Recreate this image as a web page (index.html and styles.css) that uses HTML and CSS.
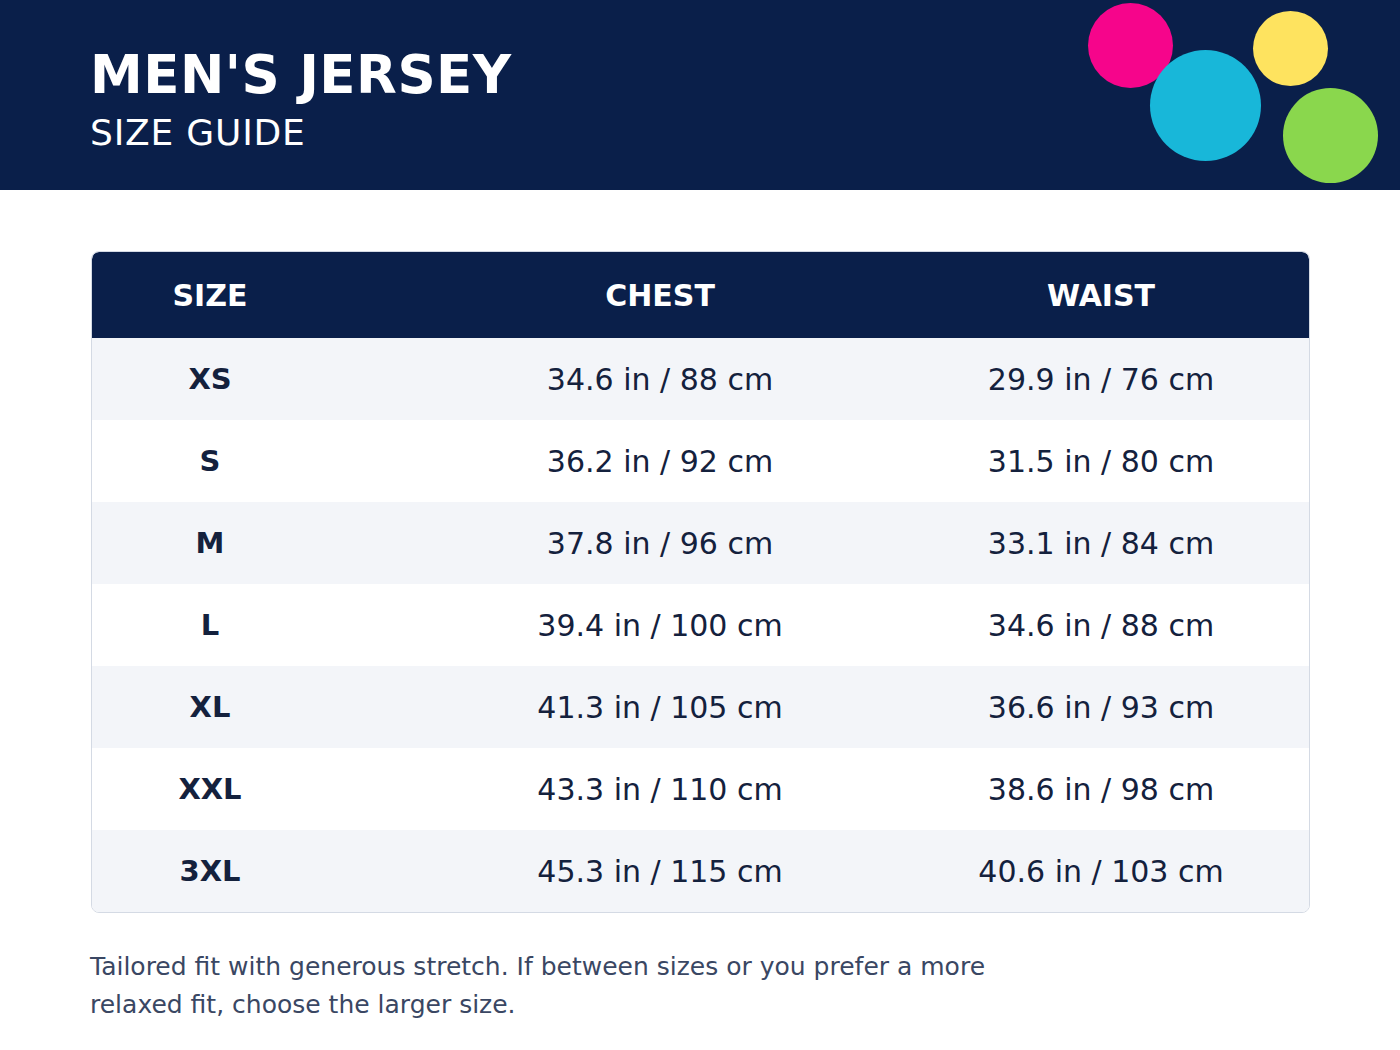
FILE: index.html
```html
<!DOCTYPE html>
<html lang="en">
<head>
<meta charset="utf-8">
<title>Men's Jersey Size Guide</title>
<link rel="stylesheet" href="styles.css">
</head>
<body>
<header class="hero">
  <div class="hero-text">
    <h1 class="title">MEN'S JERSEY</h1>
    <p class="subtitle">SIZE GUIDE</p>
  </div>
  <div class="dots">
    <span class="dot dot-pink"></span>
    <span class="dot dot-cyan"></span>
    <span class="dot dot-yellow"></span>
    <span class="dot dot-green"></span>
  </div>
</header>
<main class="content">
  <div class="table">
    <div class="row head">
      <div class="cell">SIZE</div><div class="cell">CHEST</div><div class="cell">WAIST</div>
    </div>
    <div class="row alt"><div class="cell size">XS</div><div class="cell">34.6 in / 88 cm</div><div class="cell">29.9 in / 76 cm</div></div>
    <div class="row"><div class="cell size">S</div><div class="cell">36.2 in / 92 cm</div><div class="cell">31.5 in / 80 cm</div></div>
    <div class="row alt"><div class="cell size">M</div><div class="cell">37.8 in / 96 cm</div><div class="cell">33.1 in / 84 cm</div></div>
    <div class="row"><div class="cell size">L</div><div class="cell">39.4 in / 100 cm</div><div class="cell">34.6 in / 88 cm</div></div>
    <div class="row alt"><div class="cell size">XL</div><div class="cell">41.3 in / 105 cm</div><div class="cell">36.6 in / 93 cm</div></div>
    <div class="row"><div class="cell size">XXL</div><div class="cell">43.3 in / 110 cm</div><div class="cell">38.6 in / 98 cm</div></div>
    <div class="row alt"><div class="cell size">3XL</div><div class="cell">45.3 in / 115 cm</div><div class="cell">40.6 in / 103 cm</div></div>
  </div>
  <p class="note">Tailored fit with generous stretch. If between sizes or you prefer a more relaxed fit, choose the larger size.</p>
</main>
</body>
</html>
```
FILE: styles.css
```css
* { box-sizing: border-box; }
html, body { margin: 0; padding: 0; }
body {
  font-family: "DejaVu Sans", "Liberation Sans", sans-serif;
  background: #ffffff;
  color: #14213d;
  width: 1400px;
}
.hero {
  position: relative;
  height: 190px;
  background: #0a1f4a;
  padding: 44px 90px 0;
  overflow: hidden;
}
.title {
  margin: 0;
  color: #ffffff;
  font-size: 53px;
  font-weight: 700;
  line-height: 62px;
  letter-spacing: 0.5px;
}
.subtitle {
  margin: 6px 0 0;
  color: #ffffff;
  font-size: 36px;
  line-height: 42px;
  letter-spacing: 0.8px;
}
.dots {
  position: absolute;
  inset: 0;
}
.dot {
  position: absolute;
  border-radius: 50%;
}
.dot-pink { left: 1088px; top: 3px; width: 85px; height: 85px; background: #f6058b; }
.dot-cyan { left: 1150px; top: 50px; width: 111px; height: 111px; background: #18b7d9; }
.dot-yellow { left: 1253px; top: 11px; width: 75px; height: 75px; background: #fee35f; }
.dot-green { left: 1283px; top: 88px; width: 95px; height: 95px; background: #8ad74d; }
.content {
  padding: 61px 90px 0 91px;
}
.table {
  width: 1219px;
  border: 1px solid #d4dae4;
  border-radius: 8px;
  overflow: hidden;
}
.row {
  display: grid;
  grid-template-columns: 236px 664px 218px 99px;
  height: 82px;
  align-items: center;
  background: #ffffff;
}
.row.alt { background: #f3f5f9; }
.row.head {
  height: 86px;
  background: #0a1f4a;
  color: #ffffff;
  font-weight: 700;
  border-radius: 7px 7px 0 0;
}
.cell {
  justify-self: center;
  text-align: center;
  font-size: 30px;
  white-space: nowrap;
}
.head .cell { font-size: 30px; }
.cell.size { font-weight: 700; font-size: 29px; }
.note {
  margin: 35px 0 0 -1px;
  width: 960px;
  font-size: 25px;
  line-height: 38px;
  color: #3a4763;
}
```
